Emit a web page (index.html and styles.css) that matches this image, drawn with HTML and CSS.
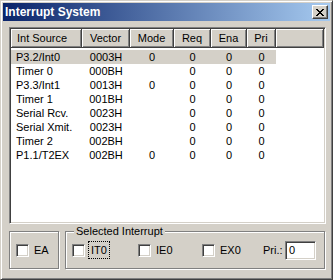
FILE: index.html
```html
<!DOCTYPE html>
<html lang="en">
<head>
    <meta charset="UTF-8">
    <title>Interrupt System</title>
    <link rel="stylesheet" href="styles.css">
</head>
<body>
    <div class="window">
        <div class="titlebar">
            <span class="title">Interrupt System</span>
            <button class="close-btn">
                <svg width="8" height="7" viewBox="0 0 8 7" shape-rendering="crispEdges">
                    <path d="M0 0h2v1h1v1h2v-1h1v-1h2v1h-1v1h-1v1h-1v1h1v1h1v1h1v1h-2v-1h-1v-1h-2v1h-1v1h-2v-1h1v-1h1v-1h1v-1h-1v-1h-1v-1h-1z" fill="#000"/>
                </svg>
            </button>
        </div>

        <div class="client">
            <div class="listview">
                <div class="lv-header">
                    <div class="hd left">Int Source</div>
                    <div class="hd">Vector</div>
                    <div class="hd">Mode</div>
                    <div class="hd">Req</div>
                    <div class="hd">Ena</div>
                    <div class="hd">Pri</div>
                    <div class="hd"></div>
                </div>
                <div class="lv-body">
                    <div class="row selected"><span class="left">P3.2/Int0</span><span>0003H</span><span>0</span><span>0</span><span>0</span><span>0</span></div>
                    <div class="row"><span class="left">Timer 0</span><span>000BH</span><span></span><span>0</span><span>0</span><span>0</span></div>
                    <div class="row"><span class="left">P3.3/Int1</span><span>0013H</span><span>0</span><span>0</span><span>0</span><span>0</span></div>
                    <div class="row"><span class="left">Timer 1</span><span>001BH</span><span></span><span>0</span><span>0</span><span>0</span></div>
                    <div class="row"><span class="left">Serial Rcv.</span><span>0023H</span><span></span><span>0</span><span>0</span><span>0</span></div>
                    <div class="row"><span class="left">Serial Xmit.</span><span>0023H</span><span></span><span>0</span><span>0</span><span>0</span></div>
                    <div class="row"><span class="left">Timer 2</span><span>002BH</span><span></span><span>0</span><span>0</span><span>0</span></div>
                    <div class="row"><span class="left">P1.1/T2EX</span><span>002BH</span><span>0</span><span>0</span><span>0</span><span>0</span></div>
                </div>
            </div>

            <div class="bottom">
                <div class="group ea-group">
                    <label class="check"><span class="box"></span>EA</label>
                </div>
                <div class="group sel-group">
                    <span class="group-label">Selected Interrupt</span>
                    <label class="check it0"><span class="box"></span><span class="focus">IT0</span></label>
                    <label class="check ie0"><span class="box"></span>IE0</label>
                    <label class="check ex0"><span class="box"></span>EX0</label>
                    <span class="pri-label">Pri.:</span>
                    <div class="pri-input">0</div>
                </div>
            </div>
        </div>
    </div>
</body>
</html>
```

FILE: styles.css
```css
* {
    box-sizing: border-box;
}

body {
    margin: 0;
    font-family: 'Liberation Sans', Arial, sans-serif;
    font-size: 11px;
    color: #000;
    background: #d4d0c8;
}

.window {
    width: 333px;
    height: 280px;
    background: #d4d0c8;
    border-top: 1px solid #d4d0c8;
    border-left: 1px solid #d4d0c8;
    border-right: 1px solid #404040;
    border-bottom: 1px solid #404040;
    box-shadow: inset 1px 1px #fff, inset -1px -1px #808080;
    padding: 2px;
    display: flex;
    flex-direction: column;
}

.titlebar {
    height: 18px;
    background: linear-gradient(to right, #0a246a, #a6caf0);
    display: flex;
    align-items: center;
    justify-content: space-between;
    padding: 0 2px;
}

.title {
    color: #fff;
    font-weight: bold;
    font-size: 12px;
}

.close-btn {
    width: 16px;
    height: 14px;
    padding: 0;
    background: #d4d0c8;
    border-top: 1px solid #fff;
    border-left: 1px solid #fff;
    border-right: 1px solid #404040;
    border-bottom: 1px solid #404040;
    box-shadow: inset -1px -1px #808080;
    display: flex;
    align-items: center;
    justify-content: center;
}

.client {
    flex: 1;
    padding: 6px 4px 0 6px;
    display: flex;
    flex-direction: column;
}

.listview {
    height: 197px;
    flex-shrink: 0;
    background: #fff;
    border-top: 1px solid #808080;
    border-left: 1px solid #808080;
    border-right: 1px solid #fff;
    border-bottom: 1px solid #fff;
    box-shadow: inset 1px 1px #404040, inset -1px -1px #d4d0c8;
    padding: 1px;
    overflow: hidden;
}

.lv-header {
    display: grid;
    grid-template-columns: 71px 48px 44px 37px 36px 29px 1fr;
    height: 19px;
}

.hd {
    background: #d4d0c8;
    border-right: 1px solid #404040;
    border-bottom: 1px solid #404040;
    box-shadow: inset 1px 1px #fff, inset -1px -1px #808080;
    text-align: center;
    line-height: 18px;
    white-space: nowrap;
}

.hd.left {
    text-align: left;
    padding-left: 6px;
}

.lv-body {
    padding-top: 2px;
}

.row {
    display: grid;
    grid-template-columns: 71px 48px 44px 37px 36px 29px;
    width: 265px;
    height: 14px;
    line-height: 14px;
}

.row span {
    text-align: center;
    white-space: nowrap;
}

.row span.left {
    text-align: left;
    padding-left: 5px;
}

.row.selected {
    background: #d4d0c8;
}

.bottom {
    display: flex;
    gap: 6px;
    margin-top: 7px;
    height: 38px;
}

.group {
    position: relative;
    border: 1px solid #808080;
    box-shadow: inset 1px 1px #fff, 1px 1px #fff;
    display: flex;
    align-items: center;
}

.ea-group {
    width: 50px;
    padding-left: 6px;
}

.sel-group {
    flex: 1;
    margin-right: 1px;
    padding-left: 6px;
}

.group-label {
    position: absolute;
    top: -7px;
    left: 8px;
    padding: 0 2px;
    background: #d4d0c8;
    line-height: 12px;
}

.check {
    display: flex;
    align-items: center;
    gap: 5px;
    flex-shrink: 0;
}

.it0 {
    width: 66px;
}

.ie0 {
    width: 64px;
}

.ex0 {
    width: 61px;
}

.box {
    width: 13px;
    height: 13px;
    background: #fff;
    border-top: 1px solid #808080;
    border-left: 1px solid #808080;
    border-right: 1px solid #fff;
    border-bottom: 1px solid #fff;
    box-shadow: inset 1px 1px #404040, inset -1px -1px #d4d0c8;
}

.focus {
    outline: 1px dotted #000;
    padding: 2px;
    line-height: 12px;
    margin-left: -1px;
}

.pri-label {
    width: 22px;
    flex-shrink: 0;
    white-space: nowrap;
}

.pri-input {
    width: 31px;
    height: 19px;
    background: #fff;
    border-top: 1px solid #808080;
    border-left: 1px solid #808080;
    border-right: 1px solid #fff;
    border-bottom: 1px solid #fff;
    box-shadow: inset 1px 1px #404040, inset -1px -1px #d4d0c8;
    padding-left: 3px;
    line-height: 17px;
}
```
